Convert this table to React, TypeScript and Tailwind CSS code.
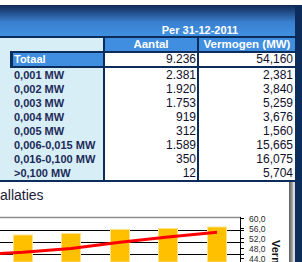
const ROWS = [
  { label: '0,001 MW', aantal: '2.381', mw: '2,381' },
  { label: '0,002 MW', aantal: '1.920', mw: '3,840' },
  { label: '0,003 MW', aantal: '1.753', mw: '5,259' },
  { label: '0,004 MW', aantal: '919', mw: '3,676' },
  { label: '0,005 MW', aantal: '312', mw: '1,560' },
  { label: '0,006-0,015 MW', aantal: '1.589', mw: '15,665' },
  { label: '0,016-0,100 MW', aantal: '350', mw: '16,075' },
  { label: '>0,100 MW', aantal: '12', mw: '5,704' },
]

// bar x positions and tops, in chart coords (chart starts at page y 205)
const BARS = [
  { x: 13, top: 30 },
  { x: 61, top: 28.5 },
  { x: 110, top: 24.5 },
  { x: 158, top: 23.5 },
  { x: 207, top: 22 },
]

const AXIS = ['60,0', '56,0', '52,0', '48,0', '44,0']

function Chart() {
  return (
    <svg width="289" height="57" viewBox="0 0 289 57" className="block">
      <line x1="0" y1="12.5" x2="241" y2="12.5" stroke="#8f8f8f" strokeWidth="1.5" />
      {[25.5, 37.5, 49.5].map((y) => (
        <line key={y} x1="0" y1={y} x2="244" y2={y} stroke="#000" strokeWidth="1" />
      ))}
      {BARS.map((b) => (
        <rect key={b.x} x={b.x + 0.5} y={b.top} width="19" height={57 - b.top} fill="#ffc000" stroke="#ffe38a" strokeWidth="1" />
      ))}
      <polyline
        points="-25,50 23,47.3 71,43.5 120,37.3 168,32 217,27.2"
        fill="none"
        stroke="#ff0000"
        strokeWidth="3"
        strokeLinejoin="round"
      />
      <line x1="240.5" y1="12" x2="240.5" y2="57" stroke="#000" strokeWidth="1" />
      {AXIS.map((v, i) => (
        <g key={v}>
          <line x1="240" y1={13.5 + i * 10} x2="244" y2={13.5 + i * 10} stroke="#000" strokeWidth="1" />
          <text x="249" y={16.5 + i * 10} fontSize="8.5" fill="#2b2b2b" fontFamily="'Liberation Sans', Arial, sans-serif">
            {v}
          </text>
        </g>
      ))}
      <text
        x="272"
        y="35"
        transform="rotate(90 272 35)"
        fontSize="11"
        fontWeight="bold"
        fill="#111"
        fontFamily="'Liberation Sans', Arial, sans-serif"
      >
        Verm
      </text>
    </svg>
  )
}

export default function App() {
  return (
    <div className="w-[302px] h-[262px] overflow-hidden bg-white font-['Liberation_Sans',Arial,sans-serif]">
      {/* Table */}
      <div className="mt-[5px] bg-[#0c2d5c] pr-[7px] pb-[2px]">
        <div className="h-[31px] bg-gradient-to-b from-[#112a56] via-[#3a80d0] via-55% to-[#4090e0] pl-[105px] pt-[19px] text-center text-[11px] font-bold leading-[13px] text-white">
          Per 31-12-2011
        </div>
        <div className="mt-[2px] flex h-[13px] gap-[2px] text-[11.5px] font-bold leading-[13px] text-white">
          <div className="w-[103px] bg-[#d7eef6]" />
          <div className="w-[92px] bg-[#3f8ee0] text-center">Aantal</div>
          <div className="flex-1 bg-[#3f8ee0] text-center">Vermogen (MW)</div>
        </div>
        <div className="flex h-[17px] gap-[2px] text-[12px] leading-[13px] text-[#10102a]">
          <div className="w-[103px] bg-[#d7eef6] pl-[10px]">
            <div className="h-full border-y-2 border-l-[3px] border-[#0c2d5c] bg-[#3f8ee0] pl-px text-[11px] font-bold text-white">
              Totaal
            </div>
          </div>
          <div className="w-[92px] border-y-2 border-[#0c2d5c] bg-white pr-px text-right">9.236</div>
          <div className="flex-1 border-y-2 border-[#0c2d5c] bg-white pr-[2px] text-right">54,160</div>
        </div>
        {ROWS.map((r) => (
          <div key={r.label} className="flex h-[14px] gap-[2px] leading-[14px]">
            <div className="w-[103px] bg-[#d7eef6] pl-[14px] text-[11px] font-bold text-[#1c2a58]">{r.label}</div>
            <div className="w-[92px] bg-white pr-px text-right text-[12px] text-[#10102a]">{r.aantal}</div>
            <div className="flex-1 bg-white pr-[2px] text-right text-[12px] text-[#10102a]">{r.mw}</div>
          </div>
        ))}
      </div>

      {/* Chart panel */}
      <div className="flex h-[80px]">
        <div className="w-[289px] bg-white">
          <div className="h-[23px] pt-[5px] text-[14px] leading-[16px] text-[#1b1b3a]">allaties</div>
          <Chart />
        </div>
        <div className="w-[4px] bg-gradient-to-r from-[#5a5a5a] to-[#b5b5b5]" />
        <div className="w-[2px] bg-[#d8d8d8]" />
        <div className="flex-1 bg-[#0c2d5c]" />
      </div>
    </div>
  )
}
